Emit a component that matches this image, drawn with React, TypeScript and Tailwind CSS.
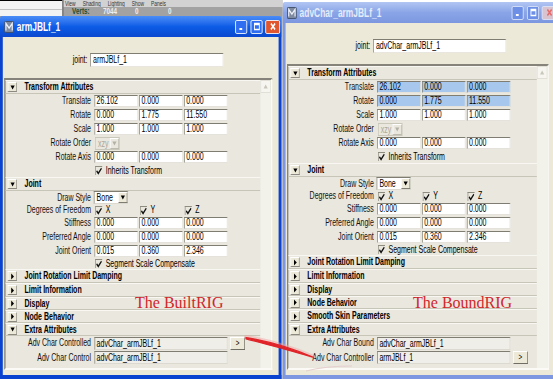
import React from "react";

type Row = {
  t: "head" | "fields" | "order" | "style" | "dof" | "check" | "link";
  label?: string;
  open?: boolean;
  h?: string;
  v?: string[];
  blue?: boolean;
  value?: string;
  button?: boolean;
};

const common = (blue: boolean): Row[] => [
  { t: "head", label: "Transform Attributes", open: true, h: "h-[14px]" },
  { t: "fields", label: "Translate", v: ["26.102", "0.000", "0.000"], blue },
  { t: "fields", label: "Rotate", v: ["0.000", "1.775", "11.550"], blue },
  { t: "fields", label: "Scale", v: ["1.000", "1.000", "1.000"] },
  { t: "order", label: "Rotate Order" },
  { t: "fields", label: "Rotate Axis", v: ["0.000", "0.000", "0.000"] },
  { t: "check", label: "Inherits Transform", h: "h-[13px]" },
  { t: "head", label: "Joint", open: true, h: "h-[14px]" },
  { t: "style", label: "Draw Style" },
  { t: "dof", label: "Degrees of Freedom" },
  { t: "fields", label: "Stiffness", v: ["0.000", "0.000", "0.000"] },
  { t: "fields", label: "Preferred Angle", v: ["0.000", "0.000", "0.000"] },
  { t: "fields", label: "Joint Orient", v: ["0.015", "0.360", "2.346"] },
  { t: "check", label: "Segment Scale Compensate", h: "h-[11px]" },
  { t: "head", label: "Joint Rotation Limit Damping", h: "h-[14px]" },
  { t: "head", label: "Limit Information", h: "h-[14px]" },
  { t: "head", label: "Display", h: "h-[13px]" },
  { t: "head", label: "Node Behavior", h: "h-[13px]" },
];

const LEFT_ROWS: Row[] = [
  ...common(false),
  { t: "head", label: "Extra Attributes", open: true, h: "h-[13px]" },
  { t: "link", label: "Adv Char Controlled", value: "advChar_armJBLf_1", button: true, h: "h-[14px]" },
  { t: "link", label: "Adv Char Control", value: "advChar_armJBLf_1", h: "h-[15px]" },
];

const RIGHT_ROWS: Row[] = [
  ...common(true),
  { t: "head", label: "Smooth Skin Parameters", h: "h-[14px]" },
  { t: "head", label: "Extra Attributes", open: true, h: "h-[13px]" },
  { t: "link", label: "Adv Char Bound", value: "advChar_armJBLf_1", h: "h-[14px]" },
  { t: "link", label: "Adv Char Controller", value: "armJBLf_1", button: true, h: "h-[15px]" },
];

function Arrow({ open }: { open?: boolean }) {
  return (
    <span className="flex h-[10px] w-[13px] items-center justify-center border border-t-white border-l-white border-r-[#8c8a80] border-b-[#8c8a80] bg-[#ece9d8]">
      <svg width="8" height="7" viewBox="0 0 8 7">
        {open ? <path d="M1 1.5h6L4 5.5z" fill="#000" /> : <path d="M2 0.5v6L6 3.5z" fill="#000" />}
      </svg>
    </span>
  );
}

function Check() {
  return (
    <span className="flex h-[9px] w-[10px] items-center justify-center border-l border-t border-[#8f8c80]">
      <svg width="9" height="8" viewBox="0 0 9 8">
        <path d="M1 3.8 L3.4 6.4 L8 1.2" fill="none" stroke="#111" strokeWidth="1.7" />
      </svg>
    </span>
  );
}

function Label({ text }: { text?: string }) {
  return <span className="w-[122px] shrink-0 text-right text-[10px] leading-[12px] text-[#111]">{text}</span>;
}

function Field({ v, blue }: { v: string; blue?: boolean }) {
  return (
    <div
      className={`h-[12px] w-[62px] border border-t-[#7f7d72] border-l-[#7f7d72] border-r-[#e4e2da] border-b-[#e4e2da] pl-[2px] text-[10px] leading-[10px] ${
        blue ? "bg-[#a7c8ec]" : "bg-white"
      }`}
    >
      {v}
    </div>
  );
}

function RowView({ r }: { r: Row }) {
  if (r.t === "head") {
    return (
      <div className={`flex items-center border-t border-t-[#f8f7f2] border-b border-b-[#c7c4b8] ${r.h}`}>
        <div className="ml-[3px]">
          <Arrow open={r.open} />
        </div>
        <span className="ml-[11px] text-[10px] font-bold leading-[12px]">{r.label}</span>
      </div>
    );
  }
  if (r.t === "fields") {
    return (
      <div className="flex h-[14px] items-center">
        <Label text={r.label} />
        <div className="ml-[5px] flex gap-[2px]">
          {r.v!.map((x, i) => (
            <Field key={i} v={x} blue={r.blue} />
          ))}
        </div>
      </div>
    );
  }
  if (r.t === "order") {
    return (
      <div className="flex h-[14px] items-center">
        <Label text={r.label} />
        <div className="ml-[6px] flex h-[13px] w-[35px] border border-[#c9c6ba]">
          <span className="flex-1 pl-[3px] text-[10px] leading-[11px] text-[#aaa79b]">xzy</span>
          <span className="flex w-[13px] items-center justify-center border border-t-white border-l-white border-r-[#bdbab0] border-b-[#bdbab0]">
            <svg width="7" height="5" viewBox="0 0 7 5">
              <path d="M0.5 0.5h6L3.5 4.5z" fill="#b3b0a5" />
            </svg>
          </span>
        </div>
      </div>
    );
  }
  if (r.t === "style") {
    return (
      <div className="flex h-[13px] items-center">
        <Label text={r.label} />
        <div className="ml-[4px] flex h-[13px] w-[49px] border border-t-[#7f7d72] border-l-[#7f7d72] border-r-[#dcdad0] border-b-[#dcdad0] bg-white">
          <span className="flex-1 pl-[3px] text-[10px] leading-[11px]">Bone</span>
          <span className="flex w-[13px] items-center justify-center border border-t-white border-l-white border-r-[#7f7d72] border-b-[#7f7d72] bg-[#ece9d8]">
            <svg width="7" height="5" viewBox="0 0 7 5">
              <path d="M0.5 0.5h6L3.5 4.5z" fill="#000" />
            </svg>
          </span>
        </div>
      </div>
    );
  }
  if (r.t === "dof") {
    return (
      <div className="flex h-[12px] items-center">
        <Label text={r.label} />
        <div className="ml-[6px] flex gap-[2px]">
          {["X", "Y", "Z"].map((x) => (
            <div key={x} className="flex w-[62px] items-center">
              <Check />
              <span className="ml-[5px] text-[10px] leading-[10px]">{x}</span>
            </div>
          ))}
        </div>
      </div>
    );
  }
  if (r.t === "check") {
    return (
      <div className={`flex items-center ${r.h}`}>
        <Label />
        <div className="ml-[6px] flex items-center">
          <Check />
          <span className="ml-[5px] text-[10px] leading-[10px]">{r.label}</span>
        </div>
      </div>
    );
  }
  return (
    <div className={`flex items-center ${r.h}`}>
      <Label text={r.label} />
      <div className="ml-[5px] h-[13px] w-[190px] border border-t-[#7f7d72] border-l-[#7f7d72] border-r-[#dcdad0] border-b-[#dcdad0] bg-[#efeee8] pl-[2px] text-[10px] leading-[11px]">
        {r.value}
      </div>
      {r.button && (
        <div className="ml-[4px] flex h-[13px] w-[21px] items-center justify-center border border-t-white border-l-white border-r-[#6f6d64] border-b-[#6f6d64] bg-[#ece9d8] text-[9px] leading-[9px]">
          &gt;
        </div>
      )}
    </div>
  );
}

function Panel({ rows }: { rows: Row[] }) {
  return (
    <div className="ml-[2px] mr-[9px] mt-[11px] flex border-2 border-t-[#86847a] border-l-[#86847a] border-r-[#fbfaf6] border-b-[#fbfaf6] bg-[#e9e7de]">
      <div className="flex flex-1 flex-col pb-[3px]">
        {rows.map((r, i) => (
          <RowView key={i} r={r} />
        ))}
      </div>
      <div className="flex w-[15px] flex-col bg-[#f2f1ea]">
        <div className="flex h-[13px] items-center justify-center border border-[#e2e0d6] bg-[#f6f5f0]">
          <svg width="7" height="5" viewBox="0 0 7 5">
            <path d="M0.5 4.5h6L3.5 0.5z" fill="#c9c6ba" />
          </svg>
        </div>
      </div>
    </div>
  );
}

function MayaIcon() {
  return (
    <svg width="14" height="12" viewBox="0 0 14 12">
      <rect x="0.5" y="0.5" width="13" height="11" rx="1" fill="#7d8aa0" stroke="#3b4a66" />
      <path d="M2.5 9.5 V2.5 L7 7 L11.5 2.5 V9.5" fill="none" stroke="#eef2fa" strokeWidth="1.6" />
    </svg>
  );
}

function TBtn({ kind, active }: { kind: "min" | "max" | "close"; active: boolean }) {
  const base = "flex h-[14px] items-center justify-center rounded-[2px] border";
  if (kind === "close") {
    return (
      <div className={`${base} w-[21px] ${active ? "border-white bg-[#e0562f]" : "border-[#dfe6f8] bg-[#d9c3cf]"}`}>
        <svg width="10" height="9" viewBox="0 0 10 9">
          <path d="M2 1.5l6 6M8 1.5l-6 6" stroke={active ? "#fff" : "#e46c6c"} strokeWidth="1.8" />
        </svg>
      </div>
    );
  }
  return (
    <div className={`${base} w-[17px] ${active ? "border-white bg-[#2f6ef0]" : "border-[#dfe6f8] bg-[#6d90e6]"}`}>
      <svg width="10" height="9" viewBox="0 0 10 9">
        {kind === "min" ? (
          <rect x="2" y="6" width="4" height="2" fill="#fff" />
        ) : (
          <path d="M1.5 1.5h7v6h-7z M1.5 2.5h7" fill="none" stroke="#fff" strokeWidth="1.3" />
        )}
      </svg>
    </div>
  );
}

function TitleBar({ title, active }: { title: string; active: boolean }) {
  return (
    <div
      className={`flex h-[21px] shrink-0 items-center rounded-t-[3px] pl-[6px] pr-[2px] bg-linear-to-b ${
        active ? "from-[#4a8cf6] via-[#0d5de6] to-[#0a48cf]" : "from-[#b2c6f3] via-[#8aa5e7] to-[#7c97df]"
      }`}
    >
      <MayaIcon />
      <span className={`ml-[4px] flex-1 text-[12px] font-bold leading-[14px] ${active ? "text-white" : "text-[#e4ebfb]"}`}>
        {title}
      </span>
      <div className="flex items-center">
        <TBtn kind="min" active={active} />
        <div className="ml-[5px]">
          <TBtn kind="max" active={active} />
        </div>
        <div className="ml-[4px]">
          <TBtn kind="close" active={active} />
        </div>
      </div>
    </div>
  );
}

function Win({ title, name, active, rows, size }: { title: string; name: string; active: boolean; rows: Row[]; size: string }) {
  return (
    <div className={`flex shrink-0 flex-col ${size}`}>
      <TitleBar title={title} active={active} />
      <div
        className={`flex flex-1 flex-col border-x-4 border-b-4 bg-[#ece9d8] ${
          active ? "border-[#0b43d1]" : "border-[#7d98e0]"
        }`}
      >
        <div className="mt-[16px] flex h-[14px] items-center">
          <span className="w-[125px] pr-[4px] text-right text-[10px] leading-[12px]">joint:</span>
          <div className="h-[14px] w-[190px] border border-t-[#7f7d72] border-l-[#7f7d72] border-r-[#e8e6de] border-b-[#e8e6de] bg-white pl-[3px] text-[10px] leading-[12px]">
            {name}
          </div>
        </div>
        <Panel rows={rows} />
      </div>
    </div>
  );
}

function TopStrip() {
  return (
    <div className="flex h-[16px] w-[404px] shrink-0">
      <div className="flex w-[89px] flex-col border-t border-black bg-[#f3f3f3]">
        <div className="h-[9px] border-b border-[#c2c2c2]" />
      </div>
      <div className="w-[2px] bg-[#6f6f6f]" />
      <div className="flex flex-1 flex-col">
        <div className="flex h-[7px] items-center gap-[10px] bg-[#d2d2d2] pl-[2px] text-[7px] leading-[7px] text-[#333]">
          <span>View</span>
          <span>Shading</span>
          <span>Lighting</span>
          <span>Show</span>
          <span>Panels</span>
        </div>
        <div className="flex h-[9px] items-end bg-[#a2a2a2] pl-[12px] text-[9px] font-bold leading-[9px]">
          <span className="w-[44px] text-[#1e4d2b]">Verts:</span>
          <span className="w-[46px] text-[#eeeeee]">7044</span>
          <span className="w-[47px] text-[#eeeeee]">0</span>
          <span className="text-[#eeeeee]">0</span>
        </div>
      </div>
    </div>
  );
}

export default function App() {
  return (
    <div className="relative h-[379px] w-[553px] overflow-hidden bg-white font-['Liberation_Sans',Arial,sans-serif] text-black">
      <div className="flex h-[379px] w-[797px] origin-top-left scale-x-70">
        <div className="flex w-[404px] shrink-0 flex-col bg-[#9c9c9c]">
          <TopStrip />
          <Win title="armJBLf_1" name="armJBLf_1" active rows={LEFT_ROWS} size="h-[363px] w-[402px]" />
        </div>
        <div className="flex w-[393px] shrink-0 flex-col bg-white pt-[2px]">
          <Win
            title="advChar_armJBLf_1"
            name="advChar_armJBLf_1"
            active={false}
            rows={RIGHT_ROWS}
            size="h-[377px] w-[393px]"
          />
        </div>
      </div>

      <span className="absolute left-[135px] top-[295px] font-['Liberation_Serif',serif] text-[16px] leading-none text-[#d0262b]">
        The BuiltRIG
      </span>
      <span className="absolute left-[413px] top-[295px] font-['Liberation_Serif',serif] text-[16px] leading-none text-[#d0262b]">
        The BoundRIG
      </span>
      <svg className="pointer-events-none absolute inset-0" width="553" height="379" viewBox="0 0 553 379">
        <path d="M246 337 C 265 340, 290 347, 314 357" fill="none" stroke="#f2a0a0" strokeWidth="4" strokeLinecap="round" opacity="0.45" />
        <path d="M246 337.5 C 264 340.5, 288 346.5, 314 357.5 C 289 350, 265 344, 246 338.8 Z" fill="#e0252a" stroke="#e0252a" strokeWidth="1.2" />
        <path d="M306 371 Q 325 366 352 366" fill="none" stroke="#e6cfcf" strokeWidth="1" />
      </svg>
    </div>
  );
}
